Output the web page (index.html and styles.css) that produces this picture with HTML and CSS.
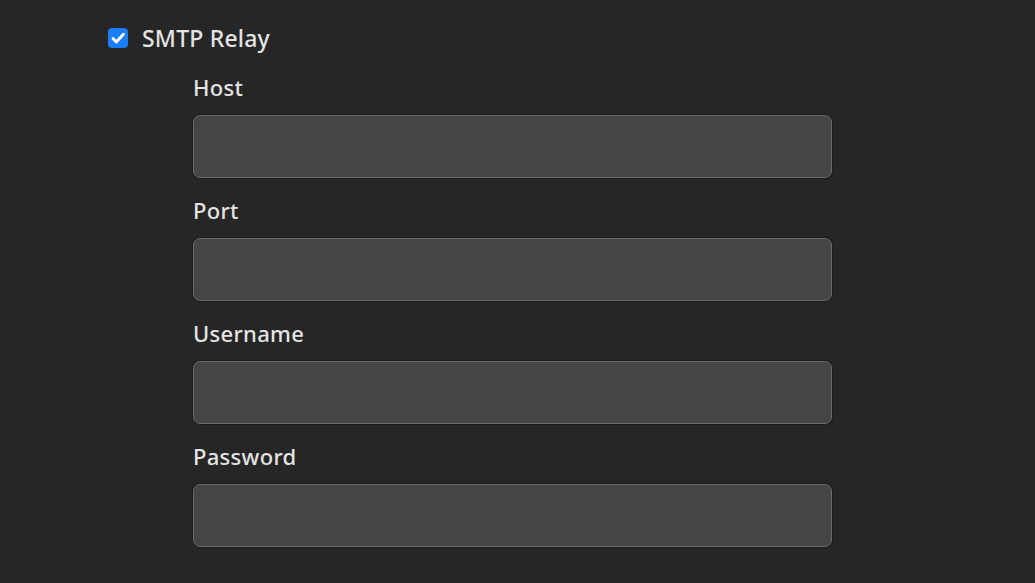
FILE: index.html
```html
<!DOCTYPE html>
<html>
<head>
<meta charset="utf-8">
<link rel="stylesheet" href="styles.css">
</head>
<body>
<div class="page">
  <label class="relay">
    <span class="check">
      <svg viewBox="0 0 20 20" width="20" height="20"><path d="M5 10.6 L8.3 14 L15.4 6.2" fill="none" stroke="#fff" stroke-width="2.9" stroke-linecap="round" stroke-linejoin="round"/></svg>
    </span>
    <span class="relay-text">SMTP Relay</span>
  </label>
  <div class="fields">
    <div class="field">
      <div class="label">Host</div>
      <div class="input"></div>
    </div>
    <div class="field">
      <div class="label">Port</div>
      <div class="input"></div>
    </div>
    <div class="field">
      <div class="label">Username</div>
      <div class="input"></div>
    </div>
    <div class="field">
      <div class="label">Password</div>
      <div class="input"></div>
    </div>
  </div>
</div>
</body>
</html>
```
FILE: styles.css
```css
html, body {
  margin: 0;
  background: #262626;
  height: 100%;
}
body {
  font-family: "Noto Sans", "Open Sans", sans-serif;
  color: #e4e4e4;
}
.page {
  padding: 23px 0 0 108px;
}
.relay {
  display: flex;
  align-items: center;
  height: 30px;
  gap: 14px;
}
.check {
  width: 20px;
  height: 20px;
  border-radius: 4px;
  background: #1a7ef5;
  display: flex;
}
.relay-text {
  font-size: 23px;
  font-weight: 500;
  line-height: 30px;
  letter-spacing: 0.2px;
}
.fields {
  padding-left: 85px;
  padding-top: 20px;
  display: flex;
  flex-direction: column;
  gap: 18px;
}
.field {
  display: flex;
  flex-direction: column;
  gap: 13px;
}
.label {
  font-size: 22px;
  font-weight: 500;
  line-height: 29px;
  letter-spacing: 0.3px;
}
.input {
  width: 637px;
  height: 61px;
  background: #454545;
  border: 1px solid #6b6b6b;
  border-radius: 7px;
  box-shadow: 0 0 0 1px #1c1c1c;
}
```
